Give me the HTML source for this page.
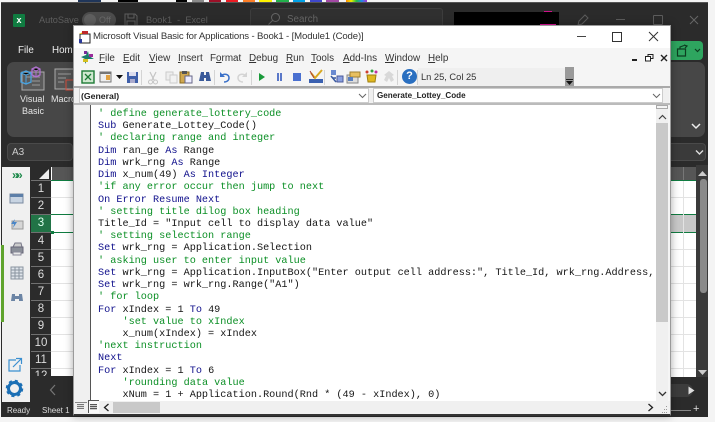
<!DOCTYPE html>
<html><head><meta charset="utf-8">
<style>
html,body{margin:0;padding:0;background:#f4f4f4}
body{width:715px;height:422px;overflow:hidden;position:relative;font-family:"Liberation Sans",sans-serif;filter:blur(.3px)}
div,span.a,svg,pre{position:absolute}
.t{white-space:nowrap}
u{text-decoration:underline;text-underline-offset:1px;text-decoration-thickness:1px}
pre{margin:0;font-family:"Liberation Mono",monospace;font-size:10.2px;line-height:12.22px;color:#151515}
pre b{font-weight:normal;color:#10108c}
pre i{font-style:normal;color:#0b8f25}
.m{font-size:9.9px;color:#333;top:53px;white-space:nowrap}
.rh{left:31px;width:20px;height:16px;background:#2b2b2b;color:#ddd;font-size:11.500px;line-height:16px;text-align:center}
.gl{left:51px;width:22px;height:1px;background:#e3e3e3}
.gr{left:671px;width:25px;height:1px;background:#e3e3e3}
.sep{width:1px;height:15px;top:70px;background:#d4d4d4}
</style></head><body>
<!-- top strip -->
<div style="left:78px;top:0;width:23px;height:2px;background:#20365a"></div>
<div style="left:118px;top:0;width:20px;height:2px;background:#000"></div>
<div style="left:176px;top:0;width:11px;height:2px;background:#000"></div>
<div style="left:192px;top:0;width:12px;height:2px;background:#8a8a8a"></div>
<div style="left:209px;top:0;width:12px;height:2px;background:#9c1028"></div>
<div style="left:226px;top:0;width:12px;height:2px;background:#ec1c24"></div>
<div style="left:243px;top:0;width:12px;height:2px;background:#ff7f27"></div>
<div style="left:259px;top:0;width:13px;height:2px;background:#fff200"></div>
<div style="left:276px;top:0;width:13px;height:2px;background:#22b14c"></div>
<div style="left:293px;top:0;width:12px;height:2px;background:#00a2e8"></div>
<div style="left:310px;top:0;width:12px;height:2px;background:#3f48cc"></div>
<div style="left:326px;top:0;width:13px;height:2px;background:#a349a4"></div>
<div style="left:346px;top:0;width:21px;height:2px;background:linear-gradient(90deg,#f80,#ee0,#2b4,#28e,#a3c)"></div>

<!-- excel window -->
<div style="left:1px;top:2px;width:707px;height:414px;background:#2b2b2b;border-top:1px solid #555"></div>
<div style="left:13px;top:14px;width:12px;height:13px;background:#107c41;border-radius:1px;color:#fff;font-size:9px;font-weight:bold;line-height:13px;text-align:center">x</div>
<div class="t" style="left:39px;top:15px;font-size:9.2px;color:#5e5e5e">AutoSave</div>
<div style="left:82px;top:12px;width:34px;height:16px;border-radius:8px;background:#4c4c4c"></div>
<div style="left:84px;top:14px;width:12px;height:12px;border-radius:6px;background:#5f5f5f"></div>
<div class="t" style="left:99px;top:15px;font-size:9px;color:#6a6a6a">Off</div>
<svg style="left:124px;top:13px" width="14" height="14"><path d="M1 1h10l2 2v10H1zM4 1v4h6V1M3 13V8h8v5" fill="none" stroke="#5e5e5e"/></svg>
<div class="t" style="left:146px;top:15px;font-size:9.200px;color:#5e5e5e">Book1 &nbsp;-&nbsp; Excel</div>
<div style="left:250px;top:8px;width:191px;height:18px;background:#303030;border:1px solid #3d3d3d;border-radius:3px"></div>
<svg style="left:267px;top:12px" width="14" height="14"><circle cx="8.5" cy="5.5" r="4" fill="none" stroke="#666"/><path d="M5.5 8.5L1.5 12.5" stroke="#666"/></svg>
<div class="t" style="left:287px;top:14px;font-size:9.800px;color:#666">Search</div>
<div style="left:454px;top:12px;width:105px;height:13px;background:#000"></div>
<div style="left:544px;top:11px;width:8px;height:1px;background:#d0108a"></div>
<div style="left:540px;top:24px;width:16px;height:1px;background:#e0109a"></div>
<svg style="left:576px;top:13px" width="14" height="14"><path d="M2 12l1-4 6-6 3 3-6 6z" fill="none" stroke="#5c5c5c"/></svg>
<div style="left:616px;top:19px;width:9px;height:1px;background:#5c5c5c"></div>
<div style="left:653px;top:15px;width:8px;height:8px;border:1px solid #5c5c5c;border-radius:1px"></div>
<svg style="left:689px;top:15px" width="10" height="10"><path d="M1 1l8 8M9 1l-8 8" stroke="#666"/></svg>

<div class="t" style="left:18px;top:45px;font-size:9.800px;color:#eee">File</div>
<div class="t" style="left:52px;top:45px;font-size:9.800px;color:#eee">Home</div>

<!-- ribbon -->
<div style="left:7px;top:62px;width:80px;height:75px;background:#474747;border-radius:7px"></div>
<svg style="left:19px;top:65px" width="28" height="26">
<rect x="3" y="7" width="22" height="18" fill="#5a5a5a" stroke="#aaa"/>
<path d="M7 12h14M13 16h8M13 20h8" stroke="#999"/>
<path d="M2 8l5-2 5 2v9l-5 2-5-2z" fill="none" stroke="#4aa3e0" stroke-width="1.3"/><path d="M2 8l5 2 5-2M7 10v9" stroke="#4aa3e0"/>
<path d="M13 4l4-2 4 2v6l-4 2-4-2z" fill="none" stroke="#b070d0" stroke-width="1.3"/><path d="M13 4l4 2 4-2M17 6v6" stroke="#b070d0"/>
</svg>
<div class="t" style="left:20px;top:94px;font-size:9px;color:#e6e6e6">Visual</div>
<div class="t" style="left:22px;top:106px;font-size:9px;color:#e6e6e6">Basic</div>
<svg style="left:54px;top:68px" width="20" height="24"><rect x="1" y="1" width="19" height="20" fill="#555" stroke="#aaa"/><path d="M4 6h13M4 10h8M4 14h6" stroke="#999"/><rect x="12" y="12" width="8" height="10" fill="none" stroke="#d04a3a"/></svg>
<div class="t" style="left:51px;top:94px;font-size:9px;color:#e6e6e6">Macro</div>
<div style="left:660px;top:62px;width:45px;height:75px;background:#474747;border-radius:7px"></div>
<svg style="left:691px;top:122px" width="10" height="8"><path d="M1 2l4 4 4-4" fill="none" stroke="#eee" stroke-width="1.5"/></svg>
<div style="left:660px;top:41px;width:43px;height:19px;background:#2ea55f;border-radius:4px"></div>
<svg style="left:676px;top:44px" width="26" height="13"><path d="M1.500 5h8v7h-8zM4 5V3l4-1.500M8 1l3 1-2 2" fill="none" stroke="#0d3d20" stroke-width="1.200"/><path d="M19 5l2.500 2.500L24 5" fill="none" stroke="#0d3d20" stroke-width="1.200"/></svg>

<!-- formula bar -->
<div style="left:7px;top:143px;width:66px;height:18px;background:#3a3a3a;border:1px solid #4a4a4a;border-radius:4px;box-sizing:border-box"></div>
<div class="t" style="left:12px;top:147px;font-size:10px;color:#ccc">A3</div>
<div style="left:660px;top:143px;width:46px;height:18px;background:#3a3a3a;border:1px solid #4a4a4a;border-radius:4px;box-sizing:border-box"></div>
<svg style="left:695px;top:149px" width="9" height="7"><path d="M1 1.500l3.500 3.500 3.500-3.500" fill="none" stroke="#ddd" stroke-width="1.400"/></svg>

<!-- sidebar -->
<div style="left:2px;top:167px;width:28px;height:235px;background:#f0f0f0"></div>
<div style="left:1px;top:245px;width:3px;height:77px;background:#5ea32c"></div>
<div class="t" style="left:12px;top:168px;font-size:12px;font-weight:bold;color:#1f8a4c;letter-spacing:-1px">»</div>
<div class="t" style="left:16px;top:168px;font-size:12px;font-weight:bold;color:#1f8a4c">»</div>
<svg style="left:9px;top:192px" width="16" height="12"><rect x="1" y="2" width="13" height="9" fill="#c8d4e2" stroke="#7a8aa0"/><rect x="1" y="2" width="13" height="3" fill="#5d7fa8"/></svg>
<svg style="left:9px;top:218px" width="16" height="12"><rect x="3" y="3" width="11" height="8" fill="#d6d6d6" stroke="#999"/><path d="M6 1L2 6h3l-1 4 4-6H5z" fill="#4a86c8"/></svg>
<svg style="left:9px;top:242px" width="16" height="14"><path d="M4 5l2-4h6l1 4z" fill="#ccc" stroke="#778"/><rect x="2" y="5" width="12" height="6" fill="#8a8f98" stroke="#667"/><rect x="4" y="10" width="8" height="3" fill="#e8e8e8" stroke="#889"/></svg>
<svg style="left:10px;top:266px" width="14" height="14"><rect x="1" y="1" width="12" height="12" fill="#dfe4ea" stroke="#8a94a0"/><path d="M1 4h12M1 7h12M1 10h12M5 1v12M9 1v12" stroke="#8a94a0"/></svg>
<svg style="left:10px;top:291px" width="14" height="12"><path d="M2 3h3v7H1zM9 3h3l1 7H9zM5 5h4v3H5z" fill="#6c85a5"/></svg>
<svg style="left:7px;top:357px" width="16" height="16"><path d="M9 3H2v11h11V8" fill="none" stroke="#3a8fd0" stroke-width="1.200"/><path d="M6 10l8-8M9 1.500h5.500V7" fill="none" stroke="#3a8fd0" stroke-width="1.200"/></svg>
<svg style="left:5px;top:379px" width="19" height="19"><circle cx="9.500" cy="9.500" r="6" fill="none" stroke="#1b6fb5" stroke-width="3"/><circle cx="9.500" cy="9.500" r="7.500" fill="none" stroke="#1b6fb5" stroke-width="2.500" stroke-dasharray="3 2.900"/></svg>

<!-- grid left -->
<div style="left:51px;top:167px;width:22px;height:209px;background:#fff"></div>
<div style="left:31px;top:180px;width:20px;height:196px;background:#707070"></div>
<div style="left:31px;top:167px;width:20px;height:13px;background:#2b2b2b"></div>
<svg style="left:39px;top:169px" width="11" height="10"><path d="M10 0v10H0z" fill="#eee"/></svg>
<div style="left:52px;top:167px;width:21px;height:13px;background:#565656"></div>
<div style="left:51px;top:180px;width:22px;height:1px;background:#107c41"></div>
<div class="gl" style="top:197px"></div><div class="gl" style="top:249px"></div><div class="gl" style="top:266px"></div><div class="gl" style="top:283px"></div><div class="gl" style="top:300px"></div><div class="gl" style="top:317px"></div><div class="gl" style="top:334px"></div><div class="gl" style="top:351px"></div><div class="gl" style="top:368px"></div>
<div style="left:51px;top:214px;width:22px;height:1px;background:#107c41"></div>
<div style="left:51px;top:232px;width:22px;height:1px;background:#107c41"></div>
<div style="left:51px;top:231px;width:3px;height:3px;background:#107c41"></div>
<div class="rh" style="top:181px">1</div><div class="rh" style="top:198px">2</div>
<div class="rh" style="top:215px;height:17px;line-height:17px;background:#217346;color:#dfe">3</div>
<div class="rh" style="top:233px">4</div><div class="rh" style="top:250px">5</div><div class="rh" style="top:267px">6</div><div class="rh" style="top:284px">7</div><div class="rh" style="top:301px">8</div><div class="rh" style="top:318px">9</div><div class="rh" style="top:335px">10</div><div class="rh" style="top:352px">11</div>
<div class="rh" style="top:369px;height:7px;line-height:14px;overflow:hidden">12</div>
<svg style="left:49px;top:384px" width="8" height="12"><path d="M6 1L1.500 6 6 11" fill="none" stroke="#777" stroke-width="1.200"/></svg>
<div class="t" style="left:7px;top:406px;font-size:8px;color:#ddd">Ready</div>
<div class="t" style="left:42px;top:406px;font-size:8px;color:#ddd">Sheet 1</div>

<!-- grid right -->
<div style="left:671px;top:167px;width:25px;height:210px;background:#fff"></div>
<div style="left:671px;top:167px;width:25px;height:13px;background:#565656"></div>
<div style="left:683px;top:167px;width:1px;height:13px;background:#777"></div>
<div style="left:671px;top:180px;width:25px;height:1px;background:#107c41"></div>
<div style="left:671px;top:214px;width:25px;height:19px;background:#c8c8c8;border-top:1px solid #107c41;border-bottom:1px solid #107c41;box-sizing:border-box"></div>
<div style="left:683px;top:181px;width:1px;height:196px;background:#e3e3e3"></div>
<div class="gr" style="top:197px"></div><div class="gr" style="top:249px"></div><div class="gr" style="top:266px"></div><div class="gr" style="top:283px"></div><div class="gr" style="top:300px"></div><div class="gr" style="top:317px"></div><div class="gr" style="top:334px"></div><div class="gr" style="top:351px"></div><div class="gr" style="top:368px"></div>
<div style="left:696px;top:165px;width:12px;height:212px;background:#3a3a3a"></div>
<svg style="left:698px;top:170px" width="9" height="7"><path d="M0 6l4.500-5L9 6z" fill="#ccc"/></svg>
<div style="left:700px;top:179px;width:7px;height:114px;background:#8a8a8a;border-radius:3px"></div>
<svg style="left:698px;top:369px" width="9" height="7"><path d="M0 1l4.500 5L9 1z" fill="#ccc"/></svg>
<div style="left:671px;top:384px;width:22px;height:13px;background:#3c3c3c;border-radius:0 7px 7px 0"></div>
<svg style="left:688px;top:386px" width="7" height="9"><path d="M0.500 0.500l6 4-6 4z" fill="#ddd"/></svg>
<div style="left:671px;top:410px;width:20px;height:1px;background:#888"></div>
<div class="t" style="left:693px;top:403px;font-size:11px;color:#ddd">+</div>

<!-- VBA window -->
<div style="left:73px;top:25px;width:598px;height:391px;background:#f5f5f5;border:1px solid #9a9a9a;border-bottom:2px solid #333;box-sizing:border-box;box-shadow:0 0 8px rgba(0,0,0,.35)"></div>
<div style="left:74px;top:26px;width:596px;height:22px;background:#fff"></div>
<svg style="left:78px;top:30px" width="14" height="14"><rect x="2" y="4" width="10" height="9" fill="#fff" stroke="#222"/><path d="M1 4h6V1L1 4z" fill="#e8b800"/><path d="M4 1h6v3H4z" fill="#c0282a"/><rect x="1" y="9" width="3" height="4" fill="#2a3a9a"/></svg>
<div class="t" style="left:93px;top:31px;font-size:9.600px;letter-spacing:-.14px;color:#333">Microsoft Visual Basic for Applications - Book1 - [Module1 (Code)]</div>
<div style="left:577px;top:36px;width:9px;height:1px;background:#444"></div>
<div style="left:612px;top:32px;width:8px;height:8px;border:1px solid #333"></div>
<svg style="left:648px;top:31px" width="11" height="11"><path d="M1 1l9 9M10 1l-9 9" stroke="#333"/></svg>

<!-- menu -->
<svg style="left:80px;top:50px" width="15" height="15"><path d="M1 7l5-2 2-4 1 5 5 3-6 0-3 5 0-5z" fill="#1a7a6a"/><rect x="4" y="1" width="3" height="3" fill="#7a2a9a"/><rect x="9" y="4" width="4" height="3" fill="#9a2a9a"/><rect x="3" y="9" width="5" height="3" fill="#d4c020"/></svg>
<div class="m" style="left:99px"><u>F</u>ile</div>
<div class="m" style="left:123px"><u>E</u>dit</div>
<div class="m" style="left:149px"><u>V</u>iew</div>
<div class="m" style="left:178px"><u>I</u>nsert</div>
<div class="m" style="left:210px">F<u>o</u>rmat</div>
<div class="m" style="left:249px"><u>D</u>ebug</div>
<div class="m" style="left:286px"><u>R</u>un</div>
<div class="m" style="left:311px"><u>T</u>ools</div>
<div class="m" style="left:343px"><u>A</u>dd-Ins</div>
<div class="m" style="left:385px"><u>W</u>indow</div>
<div class="m" style="left:428px"><u>H</u>elp</div>
<div style="left:632px;top:59px;width:5px;height:2px;background:#222"></div>
<svg style="left:645px;top:54px" width="9" height="8"><rect x="3" y="0.500" width="5" height="4" fill="none" stroke="#222"/><rect x="0.500" y="2.500" width="5" height="4.500" fill="#fff" stroke="#222"/></svg>
<svg style="left:660px;top:54px" width="8" height="8"><path d="M1 1l6 6M7 1L1 7" stroke="#222" stroke-width="1.400"/></svg>

<!-- toolbar -->
<svg style="left:81px;top:70px" width="14" height="14"><rect x="1" y="1" width="12" height="12" fill="#cfe8cf" stroke="#1d7a35" stroke-width="1.400"/><path d="M4 4l6 6M10 4l-6 6" stroke="#1d7a35" stroke-width="1.300"/></svg>
<svg style="left:99px;top:71px" width="14" height="12"><rect x="1" y="1" width="11" height="10" fill="#eee" stroke="#777"/><rect x="1" y="1" width="11" height="2" fill="#777"/><rect x="7" y="4" width="4" height="5" fill="#e0a040"/></svg>
<svg style="left:116px;top:75px" width="8" height="4"><path d="M0 0h7L3.500 4z" fill="#111"/></svg>
<svg style="left:126px;top:71px" width="13" height="13"><path d="M1 1h11v11H1z" fill="#3f5fa9"/><rect x="3" y="1" width="7" height="4" fill="#dde"/><rect x="4" y="8" width="5" height="4" fill="#aac"/></svg>
<div class="sep" style="left:141px"></div>
<svg style="left:147px;top:71px" width="12" height="14"><path d="M3 1l4 8M9 1L5 9" stroke="#c4c4c4" stroke-width="1.200"/><circle cx="3.500" cy="11" r="2" fill="none" stroke="#c4c4c4"/><circle cx="8.500" cy="11" r="2" fill="none" stroke="#c4c4c4"/></svg>
<svg style="left:165px;top:71px" width="13" height="13"><rect x="1" y="1" width="7" height="8" fill="#eee" stroke="#ccc"/><rect x="5" y="4" width="7" height="8" fill="#f2f2f2" stroke="#ccc"/></svg>
<svg style="left:179px;top:70px" width="14" height="14"><rect x="1" y="2" width="9" height="11" fill="#d0a850" stroke="#8a6a20"/><rect x="3" y="1" width="5" height="3" fill="#555"/><rect x="6" y="6" width="7" height="7" fill="#eef" stroke="#668"/></svg>
<svg style="left:198px;top:70px" width="14" height="14"><path d="M3 2h3v9H1zM8 2h3l2 9H8zM6 5h2v3H6z" fill="#3a5a9a"/></svg>
<div class="sep" style="left:214px"></div>
<svg style="left:218px;top:70px" width="14" height="14"><path d="M3 6c3-3 8-2 8 2 0 3-3 4-5 4" fill="none" stroke="#3a70c8" stroke-width="1.500"/><path d="M2 2v5h5z" fill="#3a70c8"/></svg>
<svg style="left:235px;top:70px" width="14" height="14"><path d="M11 6c-3-3-8-2-8 2 0 3 3 4 5 4" fill="none" stroke="#d4d4d4" stroke-width="1.500"/><path d="M12 2v5H7z" fill="#d4d4d4"/></svg>
<div class="sep" style="left:251px"></div>
<svg style="left:258px;top:72px" width="9" height="10"><path d="M1 1l6 4-6 4z" fill="#1a9a3a"/></svg>
<div style="left:277px;top:73px;width:2px;height:8px;background:#5a78c8"></div><div style="left:280px;top:73px;width:2px;height:8px;background:#5a78c8"></div>
<div style="left:293px;top:73px;width:8px;height:8px;background:#4a70d0"></div>
<svg style="left:308px;top:69px" width="16" height="15"><rect x="1" y="10" width="14" height="4" fill="#3a60b0"/><path d="M3 4l4 5 7-8" fill="none" stroke="#d8a820" stroke-width="2"/><path d="M2 2l4 7" stroke="#b04030"/></svg>
<div class="sep" style="left:324px"></div>
<svg style="left:329px;top:69px" width="15" height="15"><rect x="2" y="1" width="5" height="5" fill="#6a8ad0"/><rect x="8" y="7" width="6" height="6" fill="#8aa0e0" stroke="#4a5a9a"/><path d="M2 7l5 6M4 9h3" stroke="#3a5aa0" stroke-width="1.500"/></svg>
<svg style="left:346px;top:70px" width="15" height="14"><rect x="1" y="5" width="11" height="8" fill="#ddd" stroke="#888"/><rect x="4" y="2" width="10" height="5" fill="#e8c060" stroke="#a08030"/><rect x="2" y="7" width="5" height="4" fill="#5a80c0"/></svg>
<svg style="left:364px;top:69px" width="15" height="15"><path d="M3 6h9l-1 7H4z" fill="#e0b820" stroke="#a08010"/><circle cx="3" cy="3" r="1.500" fill="#d04030"/><circle cx="8" cy="2" r="1.500" fill="#30a040"/><circle cx="12" cy="3" r="1.500" fill="#c030a0"/></svg>
<svg style="left:382px;top:70px" width="14" height="13"><path d="M7 1l5 4-2 1 2 4-3 2-2-4-2 4-3-2 2-4-2-1z" fill="#d8d8d8"/></svg>
<div class="sep" style="left:397px"></div>
<div style="left:402px;top:69px;width:15px;height:15px;border-radius:8px;background:#2a6fc0;color:#fff;font-size:11px;font-weight:bold;line-height:15px;text-align:center">?</div>
<div class="sep" style="left:417px"></div>
<div style="left:418px;top:68px;width:147px;height:18px;background:#efefef"></div>
<div class="t" style="left:421px;top:72px;font-size:9.300px;color:#333">Ln 25, Col 25</div>
<div style="left:565px;top:67px;width:9px;height:19px;background:#9a9a9a"></div>
<div style="left:566px;top:79px;width:7px;height:1px;background:#222"></div>
<svg style="left:566px;top:81px" width="7" height="4"><path d="M0 0h7L3.500 4z" fill="#111"/></svg>
<div style="left:74px;top:86px;width:596px;height:2px;background:#aaa"></div>

<!-- combos -->
<div style="left:74px;top:88px;width:595px;height:15px;background:#f0f0f0"></div>
<div style="left:79px;top:88px;width:290px;height:15px;background:#fff;border:1px solid #ccc;box-sizing:border-box"></div>
<div class="t" style="left:81px;top:91px;font-size:8.700px;font-weight:bold;color:#222">(General)</div>
<svg style="left:358px;top:93px" width="9" height="6"><path d="M1 1l3.500 3.500L8 1" fill="none" stroke="#666"/></svg>
<div style="left:373px;top:88px;width:290px;height:15px;background:#fff;border:1px solid #ccc;box-sizing:border-box"></div>
<div class="t" style="left:377px;top:91px;font-size:8.100px;font-weight:bold;color:#222">Generate_Lottey_Code</div>
<svg style="left:652px;top:93px" width="9" height="6"><path d="M1 1l3.500 3.500L8 1" fill="none" stroke="#666"/></svg>
<div style="left:74px;top:103px;width:596px;height:2px;background:#bbb"></div>

<!-- code -->
<div style="left:74px;top:105px;width:16px;height:296px;background:#f0f0f0"></div>
<div style="left:90px;top:105px;width:1px;height:296px;background:#555"></div>
<div style="left:91px;top:105px;width:565px;height:296px;background:#fff;overflow:hidden">
<pre style="left:7px;top:4px">
<i>' define generate_lottery_code</i>
<b>Sub</b> Generate_Lottey_Code()
<i>' declaring range and integer</i>
<b>Dim</b> ran_ge <b>As</b> Range
<b>Dim</b> wrk_rng <b>As</b> Range
<b>Dim</b> x_num(49) <b>As Integer</b>
<i>'if any error occur then jump to next</i>
<b>On Error Resume Next</b>
<i>' setting title dilog box heading</i>
Title_Id = "Input cell to display data value"
<i>' setting selection range</i>
<b>Set</b> wrk_rng = Application.Selection
<i>' asking user to enter input value</i>
<b>Set</b> wrk_rng = Application.InputBox("Enter output cell address:", Title_Id, wrk_rng.Address, Type:=8)
<b>Set</b> wrk_rng = wrk_rng.Range("A1")
<i>' for loop</i>
<b>For</b> xIndex = 1 <b>To</b> 49
    <i>'set value to xIndex</i>
    x_num(xIndex) = xIndex
<i>'next instruction</i>
<b>Next</b>
<b>For</b> xIndex = 1 <b>To</b> 6
    <i>'rounding data value</i>
    xNum = 1 + Application.Round(Rnd * (49 - xIndex), 0)
</pre>
</div>

<!-- v scrollbar -->
<div style="left:656px;top:105px;width:12px;height:296px;background:#f0f0f0"></div>
<div style="left:656px;top:105px;width:12px;height:4px;background:#f5f5f5;border:1px solid #aaa;box-sizing:border-box"></div>
<svg style="left:658px;top:114px" width="9" height="6"><path d="M1 5l3.500-3.500L8 5" fill="none" stroke="#444" stroke-width="1.200"/></svg>
<div style="left:656px;top:123px;width:12px;height:199px;background:#c9c9c9"></div>
<svg style="left:658px;top:391px" width="9" height="6"><path d="M1 1l3.500 3.500L8 1" fill="none" stroke="#333" stroke-width="1.300"/></svg>

<!-- h scrollbar -->
<div style="left:74px;top:401px;width:596px;height:13px;background:#f0f0f0"></div>
<div style="left:74px;top:399px;width:14px;height:2px;background:#f0f0f0"></div>
<div style="left:75px;top:402px;width:12px;height:1px;background:#888"></div>
<div style="left:77px;top:404px;width:7px;height:5px;background:repeating-linear-gradient(#777 0 1px,#ddd 1px 2px)"></div>
<div style="left:88px;top:400px;width:11px;height:13px;background:#f8f8f8;border-left:1px solid #555;border-top:1px solid #555;box-sizing:border-box"></div>
<div style="left:90px;top:404px;width:7px;height:6px;background:repeating-linear-gradient(#555 0 1px,#ccc 1px 2px)"></div>
<svg style="left:103px;top:403px" width="7" height="9"><path d="M5.500 1L1.500 4.500 5.500 8" fill="none" stroke="#222" stroke-width="1.300"/></svg>
<div style="left:113px;top:402px;width:47px;height:11px;background:#c9c9c9"></div>
<svg style="left:647px;top:403px" width="7" height="9"><path d="M1.500 1l4 3.500-4 3.500" fill="none" stroke="#222" stroke-width="1.300"/></svg>
<svg style="left:659px;top:405px" width="9" height="9"><path d="M7 1h1v1H7zM5 4h1v1H5zM7 4h1v1H7zM3 7h1v1H3zM5 7h1v1H5zM7 7h1v1H7z" fill="#999"/></svg>
</body></html>
